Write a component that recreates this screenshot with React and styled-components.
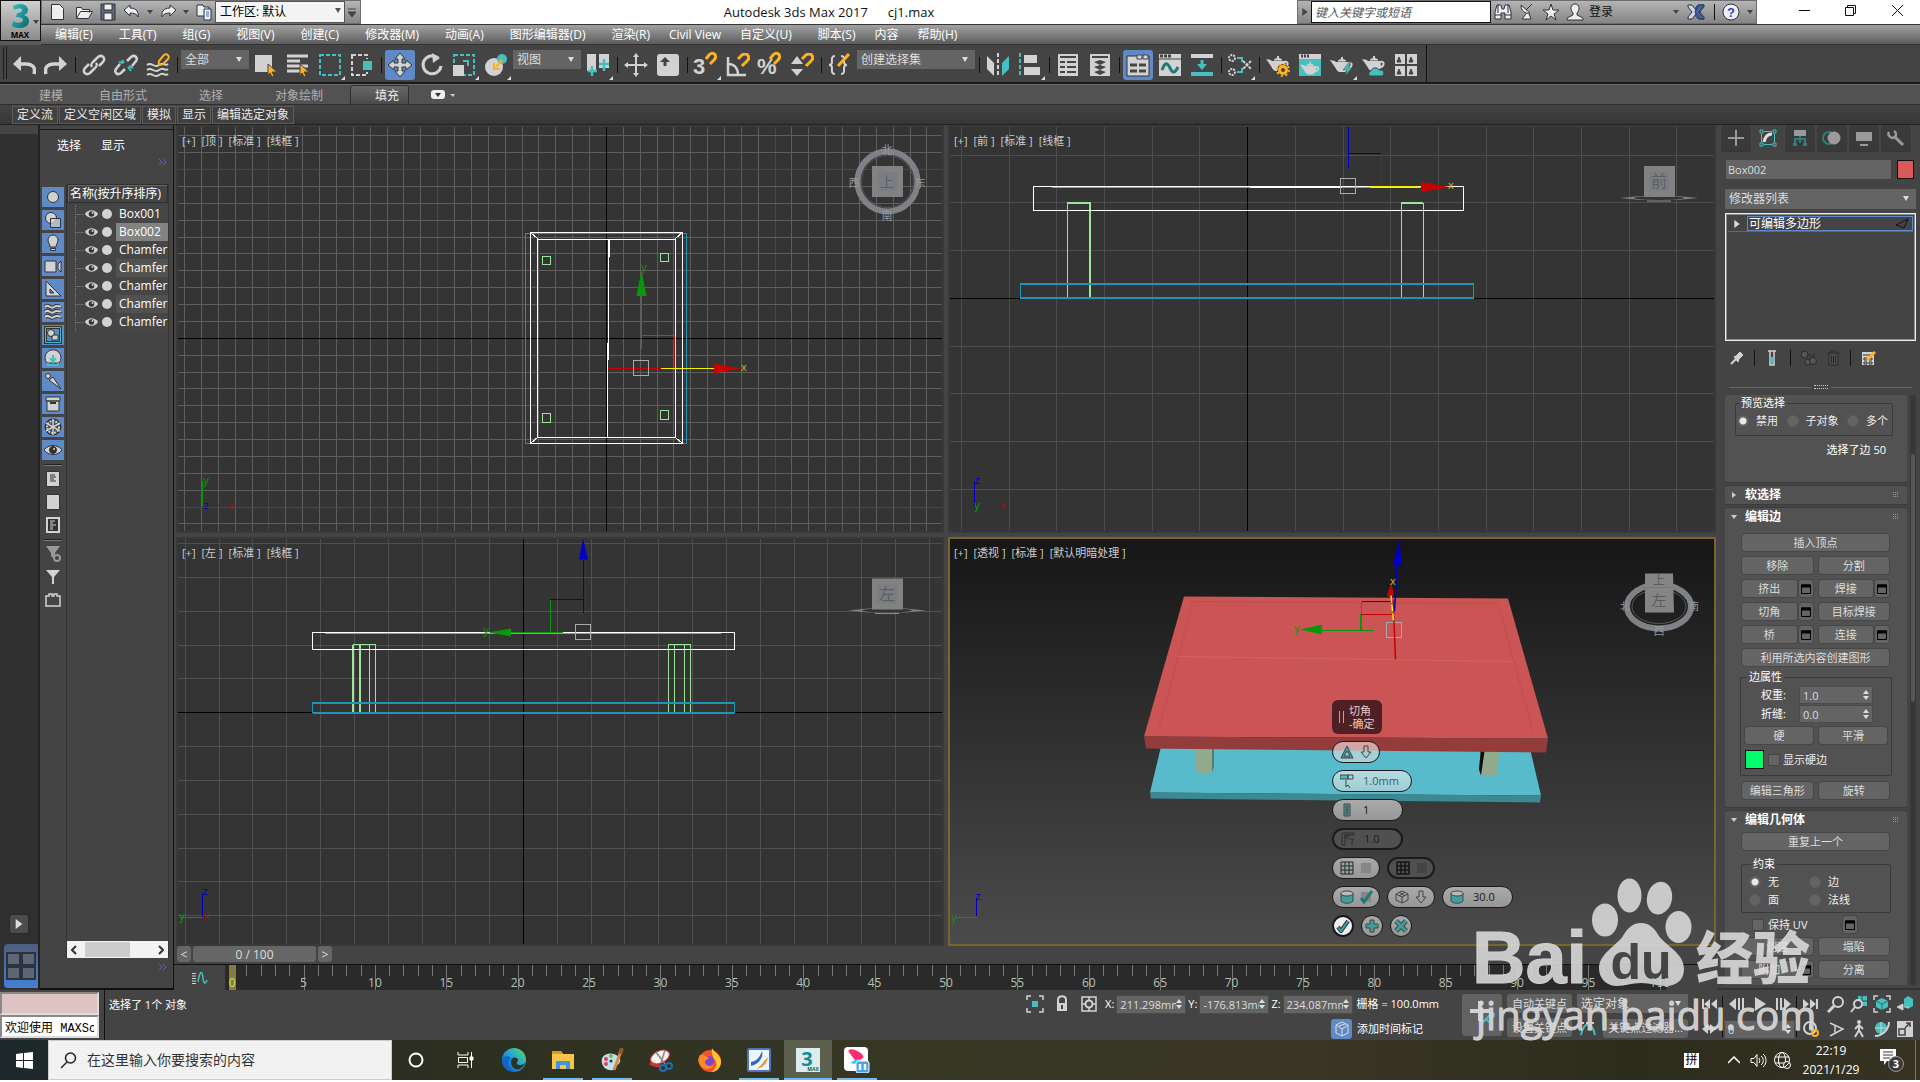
import React from "react";
import styled, { createGlobalStyle, css } from "styled-components";

const UI = `"Open Sans", "Noto Sans CJK SC", sans-serif`;
const L = "#d2d2d2";
const T = "#45bfbf";
const O = "#ffb11f";

const Global = createGlobalStyle`
  *, *::before, *::after { box-sizing: border-box; }
  body { margin: 0; background: #fff; font: 12px/16px ${UI}; color: #e6e6e6; }
  button, input, select { font: inherit; color: inherit; }
  button { padding: 0; border: 0; background: none; }
  svg { display: block; flex: none; }
  fieldset { min-width: 0; }
`;

const Page = styled.div`
  display: flex;
  flex-direction: column;
  height: 100vh;
  min-height: 900px;
  padding-bottom: 2px;
  overflow: hidden;
  position: relative;
`;

/* ---------- header ---------- */
const Header = styled.header`
  display: grid;
  grid-template-columns: 41px 1fr;
  grid-template-rows: 24px 21px;
  background: #5a5a5a;
`;
const AppButton = styled.button`
  grid-row: 1 / 3;
  height: 41px;
  border: 1px solid #111;
  background: linear-gradient(#d0d0d0, #8b8b8b);
  display: flex;
  align-items: center;
  justify-content: center;
`;
const TitleBar = styled.div`
  display: grid;
  grid-template-columns: auto 1fr auto;
  background: #fff;
`;
const Strip = styled.div`
  display: flex;
  align-items: center;
  height: 24px;
  width: ${(p) => p.$w}px;
  background: linear-gradient(#b4b4b4, #858585);
  border: 1px solid #6d6d6d;
`;
const TitleText = styled.h1`
  margin: 0;
  font-size: 13px;
  line-height: 24px;
  font-weight: 400;
  display: flex;
  justify-content: center;
  gap: 20px;
  color: #111;
`;
const StripButton = styled.button`
  flex: none;
  width: ${(p) => p.$w || 24}px;
  height: 20px;
  display: flex;
  align-items: center;
  justify-content: ${(p) => p.$side || "center"};
  color: #111;
`;
const TitleRight = styled.div`
  display: flex;
  justify-content: flex-end;
`;
const SearchBox = styled.input`
  flex: none;
  width: 180px;
  height: 22px;
  border: 1px solid #111;
  background: #fff;
  padding: 0 3px;
  font-style: italic;
  color: #333;
  &::placeholder { color: #555; opacity: 1; }
`;
const WinButtons = styled.div`
  display: flex;
  width: 163px;
  padding-left: 24px;
  color: #111;
  justify-content: space-between;
`;
const MenuBar = styled.nav`
  display: flex;
  padding-left: 1px;
  border-top: 1px solid #333;
  border-bottom: 1px solid #333;
  background: linear-gradient(#a2a2a2, #5c5c5c);
`;
const MenuItem = styled.button`
  padding: 0 ${(p) => (p.$plain ? 6 : 13)}px;
  line-height: 18px;
  color: #fff;
  white-space: nowrap;
`;

/* ---------- toolbar ---------- */
const Toolbar = styled.div`
  display: flex;
  height: 39px;
  background: #444;
  border-bottom: 2px solid #1a1a1a;
`;
const ToolGroup = styled.div`
  display: flex;
  padding: 5px 4px 0 8px;
  border-right: 1px solid #111;
  position: relative;
  &::before {
    content: "";
    position: absolute;
    left: 3px;
    top: 2px;
    width: 4px;
    height: 32px;
    border: 1px solid #1c1c1c;
    border-width: 0 1px;
  }
`;
const Tool = styled.button`
  width: 30px;
  height: 30px;
  margin: 0 1px;
  border-radius: 3px;
  display: flex;
  align-items: center;
  justify-content: center;
  background: ${(p) => (p.$on ? "#5f8ac7" : "transparent")};
  position: relative;
  ${(p) =>
    p.$more &&
    css`
      &::after {
        content: "";
        position: absolute;
        right: 0;
        bottom: 0;
        border: 2px solid #ddd;
        border-top-color: transparent;
        border-left-color: transparent;
      }
    `}
`;
const Sep = styled.span`
  width: 1px;
  height: ${(p) => p.$h || 16}px;
  margin: ${(p) => p.$m || "7px 2px 0 3px"};
  background: #111;
`;
const PickWrap = styled.span`
  display: inline-flex;
  position: relative;
  width: ${(p) => (p.$w ? p.$w + "px" : "100%")};
  margin: ${(p) => p.$m || 0};
  &::after {
    content: "";
    position: absolute;
    right: ${(p) => p.$r || 7}px;
    top: 7px;
    border: 3px solid transparent;
    border-top: 5px solid ${(p) => p.$caret || "#ddd"};
    border-bottom: 0;
    pointer-events: none;
  }
`;
const Pick = styled.select`
  appearance: none;
  width: 100%;
  height: ${(p) => p.$h || 19}px;
  border-radius: 0;
  padding: 0 16px 0 ${(p) => (p.$white ? 4 : 4)}px;
  background: ${(p) => (p.$white ? "#f4f4f4" : "#646464")};
  color: ${(p) => (p.$white ? "#000" : "#dedede")};
  border: ${(p) => (p.$white ? "1px solid #555" : "0")};
`;
function Select({ w, m, h, r, white, caret, label, value }) {
  return (
    <PickWrap $w={w} $m={m} $r={r} $caret={caret}>
      <Pick aria-label={label} $h={h} $white={white} defaultValue={value}>
        <option>{value}</option>
      </Pick>
    </PickWrap>
  );
}

/* ---------- ribbon ---------- */
const RibbonTabs = styled.div`
  display: flex;
  align-items: flex-end;
  height: 21px;
  padding-left: 15px;
  background: #525252;
  border-top: 1px solid #6c6c6c;
  border-bottom: 1px solid #2f2f2f;
`;
const RibbonTab = styled.button`
  height: 18px;
  padding: 1px 9px 0 24px;
  margin-right: ${(p) => (p.$near ? 3 : 19)}px;
  color: ${(p) => (p.$on ? "#eee" : "#b0b0b0")};
  border-radius: 2px 2px 0 0;
  background: ${(p) => (p.$on ? "linear-gradient(#686868, #4a4a4a)" : "none")};
  box-shadow: ${(p) => (p.$on ? "0 0 0 1px #303030" : "none")};
`;
const RibbonPanel = styled.div`
  display: flex;
  gap: 1px;
  height: 20px;
  padding: 1px 0 0 12px;
  background: linear-gradient(#444, #363636);
  border-bottom: 1px solid #222;
`;
const RibbonButton = styled.button`
  height: 18px;
  padding: 0 4px;
  border: 1px solid #5c5c5c;
  line-height: 16px;
  background: #404040;
  color: #e8e8e8;
`;

/* ---------- body ---------- */
const Body = styled.main`
  flex: 1;
  min-height: 0;
  display: grid;
  grid-template-columns: 40px 134px minmax(0, 1fr) 202px;
  background: #444;
`;
const LeftStrip = styled.aside`
  display: flex;
  flex-direction: column;
  align-items: center;
  justify-content: flex-end;
  gap: 10px;
  padding-bottom: 2px;
  background: linear-gradient(#444 9px, #303030 9px);
  border-right: 2px solid #222;
`;
const Expand = styled.button`
  width: 20px;
  height: 20px;
  border: 1px solid #2a2a2a;
  border-radius: 3px;
  background: #4c4c4c;
  display: flex;
  align-items: center;
  justify-content: center;
`;
const LayoutButton = styled.button`
  align-self: flex-end;
  width: 34px;
  height: 44px;
  border-radius: 4px 0 0 4px;
  background: linear-gradient(#4d5f7c, #4480d6);
  display: flex;
  align-items: center;
  justify-content: center;
`;
const Explorer = styled.section`
  display: flex;
  flex-direction: column;
  border-right: 1px solid #111;
  border-bottom: 2px solid #111;
  min-width: 0;
  min-height: 0;
`;
const ExplorerMenu = styled.div`
  display: flex;
  gap: 20px;
  padding: 4px 0 0 17px;
  margin-top: 4px;
  height: 29px;
  border-top: 1px solid #1b1b1b;
  & button { color: #fff; }
`;
const More = styled.button`
  align-self: flex-end;
  margin-right: 6px;
  width: 8px;
  height: 8px;
`;
const ExplorerBody = styled.div`
  flex: 1;
  min-height: 0;
  display: flex;
  padding: 18px 4px 0 2px;
`;
const FilterColumn = styled.div`
  width: 22px;
  display: flex;
  flex-direction: column;
  gap: 3px;
  padding-top: 3px;
`;
const Filter = styled.button`
  width: 22px;
  height: 20px;
  display: flex;
  align-items: center;
  justify-content: center;
  background: ${(p) => (p.$on ? "#5f8ac7" : "none")};
`;
const Rule = styled.hr`
  width: 18px;
  height: 2px;
  margin: 1px 2px 0;
  border: 0;
  border-top: 1px solid #222;
  border-bottom: 1px solid #777;
`;
const Tree = styled.div`
  flex: 1;
  min-width: 0;
  margin-left: 2px;
  border: 1px solid #333;
  border-width: 0 1px 0 1px;
  display: flex;
  flex-direction: column;
  justify-content: space-between;
`;
const TreeHead = styled.div`
  height: 19px;
  margin-bottom: 2px;
  padding-left: 2px;
  line-height: 17px;
  white-space: nowrap;
  overflow: hidden;
  border: 1px solid #2f2f2f;
  box-shadow: inset 1px 1px #666;
  color: #fff;
`;
const TreeList = styled.ul`
  list-style: none;
  margin: 0;
  padding: 0;
`;
const TreeRow = styled.li`
  display: flex;
  align-items: center;
  height: 18px;
  overflow: hidden;
  padding-left: 8px;
`;
const Branch = styled.i`
  flex: none;
  width: 10px;
  height: 18px;
  border-left: 1px dotted #777;
  background: linear-gradient(#666, #666) 0 9px / 8px 1px no-repeat;
`;
const TreeName = styled.span`
  flex: 1;
  min-width: 0;
  overflow: hidden;
  margin-left: 2px;
  padding-left: 3px;
  line-height: 18px;
  color: #fff;
  white-space: nowrap;
  background: ${(p) => (p.$sel ? "#828282" : p.$odd ? "#464646" : "#515151")};
`;
const HScroll = styled.div`
  display: flex;
  justify-content: space-between;
  align-items: center;
  height: 17px;
  padding: 0 4px;
  background: #f2f2f2;
  & i { width: 45px; height: 15px; background: #cdcdcd; margin-right: 20px; }
`;
const ExplorerFoot = styled.div`
  display: flex;
  flex-direction: column;
  height: 30px;
  padding-top: 5px;
`;

/* ---------- viewports ---------- */
const Center = styled.section`
  display: flex;
  flex-direction: column;
  min-width: 0;
  min-height: 0;
`;
const Views = styled.div`
  flex: 1;
  min-height: 0;
  display: grid;
  grid-template-columns: 1fr 1fr;
  grid-template-rows: 408fr 409fr;
  gap: 4px;
  padding: 0 2px;
`;
const View = styled.div`
  position: relative;
  min-width: 0;
  min-height: 0;
  border: 2px solid ${(p) => (p.$active ? "#7b662a" : "#393939")};
  background: ${(p) => (p.$active ? "linear-gradient(#161616, #4b4b4b)" : "#343434")};
  overflow: hidden;
`;
const Scene = styled.svg`
  width: 100%;
  height: 100%;
`;
const ViewLabel = styled.div`
  position: absolute;
  left: 4px;
  top: 6px;
  display: flex;
  gap: 6px;
  font-size: 11px;
  color: #ccc;
  & button { white-space: pre; line-height: 16px; }
`;
const Caddy = styled.form`
  position: absolute;
  left: 50%;
  top: 161px;
  display: flex;
  flex-direction: column;
  align-items: flex-start;
  gap: 7px;
  color: #1c1c1c;
`;
const CaddyTitle = styled.div`
  display: flex;
  align-items: center;
  gap: 5px;
  width: 50px;
  height: 34px;
  padding-left: 7px;
  border-radius: 6px;
  background: #4e2023;
  color: #eac9c9;
  font-size: 11px;
  line-height: 13px;
  & i { width: 5px; height: 12px; border: 1px solid #c99; border-width: 0 1px; }
`;
const CaddyRow = styled.div`
  display: flex;
  gap: 7px;
`;
const Pill = styled.label`
  display: flex;
  align-items: center;
  gap: 5px;
  width: ${(p) => p.$w}px;
  height: 22px;
  padding-left: ${(p) => (p.$w > 22 ? 7 : 0)}px;
  justify-content: ${(p) => (p.$w > 22 ? "flex-start" : "center")};
  border: ${(p) => (p.$off || p.$strong ? 2 : 1)}px solid #1b1b1b;
  border-radius: 11px;
  background: ${(p) =>
    p.$off
      ? "#505050"
      : p.$strong
      ? "#eee"
      : p.$tint === "cyan"
      ? "linear-gradient(#b5dce2, #9fccd3)"
      : p.$tint === "rose"
      ? "linear-gradient(#d3a5a5 40%, #a5d0d8 45%)"
      : "linear-gradient(#aaa, #979797)"};
  & input { width: 44px; min-width: 0; border: 0; padding: 0 0 0 4px; background: none; font-size: 11px; color: ${(p) => (p.$tint ? "#35606a" : "#1a1a1a")}; }
`;

/* ---------- time line ---------- */
const SliderRow = styled.div`
  display: flex;
  gap: 2px;
  height: 18px;
  padding-left: 3px;
`;
const SliderPart = styled.button`
  width: ${(p) => p.$w}px;
  height: 16px;
  border-radius: 3px;
  background: #666;
  color: #ddd;
  line-height: 15px;
`;
const Track = styled.div`
  display: grid;
  grid-template-columns: 51px 1fr 51px;
  height: 26px;
  border-top: 1px solid #111;
`;
const TrackIcon = styled.button`
  display: flex;
  align-items: center;
  justify-content: center;
`;
const Ruler = styled.div`
  display: grid;
  grid-template-columns: repeat(101, minmax(0, 1fr));
  background: #2a2a2a;
`;
const Tick = styled.span`
  position: relative;
  display: flex;
  justify-content: center;
  padding-top: 10px;
  line-height: 15px;
  color: #b5c0b5;
  height: 25px;
  &::before {
    content: "";
    position: absolute;
    left: 50%;
    top: 0;
    width: 1px;
    height: ${(p) => (p.$major ? 25 : 11)}px;
    background: #777;
  }
  & b { font-weight: 400; z-index: 1; white-space: nowrap; flex: none; }
  ${(p) => p.$now && css`background: linear-gradient(#8a8020, #8a8020) 50% 0 / 7px 25px no-repeat; color: #e0dc60;`}
`;

/* ---------- command panel ---------- */
const Command = styled.aside`
  display: flex;
  flex-direction: column;
  min-height: 0;
  padding: 0 4px 3px 3px;
  border-bottom: 2px solid #333;
`;
const Tabs = styled.div`
  display: flex;
  gap: 2px;
  height: 27px;
  margin-right: -1px;
`;
const Tab = styled.button`
  width: 30px;
  display: flex;
  align-items: center;
  justify-content: center;
  border-radius: 4px 4px 0 0;
  background: ${(p) => (p.$on ? "#444" : "#3a3a3a")};
  border-bottom: 1px solid ${(p) => (p.$on ? "#444" : "#363636")};
`;
const Pad = styled.div`
  display: flex;
  flex-direction: column;
  flex: 1;
  min-height: 0;
  padding: 8px 0 0 4px;
`;
const NameRow = styled.div`
  display: flex;
  gap: 6px;
  margin: 0 2px 10px 1px;
`;
const NameInput = styled.input`
  flex: 1;
  min-width: 0;
  height: 19px;
  border: 0;
  padding: 0 2px;
  background: #646464;
  color: #ddd;
  font-size: 11px;
`;
const Swatch = styled.button`
  width: ${(p) => p.$w}px;
  height: 19px;
  border: 1px solid #111;
  background: ${(p) => p.$c};
`;
const Stack = styled.div`
  height: 128px;
  margin-top: 4px;
  border: 1px solid #eee;
  outline: 1px solid #8c8c8c;
  outline-offset: -2px;
  padding: 2px;
`;
const StackRow = styled.div`
  display: flex;
  align-items: center;
  height: 16px;
  padding-left: 5px;
  gap: 6px;
  border-bottom: 1px solid #666;
  & button {
    flex: 1;
    height: 15px;
    border: 1px solid #5f8ac7;
    color: #fff;
    line-height: 13px;
    display: flex;
    justify-content: space-between;
    align-items: center;
    padding: 0 3px 0 1px;
  }
`;
const StackTools = styled.div`
  display: flex;
  align-items: center;
  height: 34px;
  padding-left: 1px;
`;
const StackTool = styled.button`
  width: ${(p) => p.$w || 22}px;
  display: flex;
  justify-content: center;
`;
const Splitter = styled.div`
  display: flex;
  align-items: center;
  gap: 3px;
  height: 16px;
  margin: 4px 4px 0;
  & hr { flex: 1; border: 0; border-top: 1px solid #666; margin: 0; }
  & i { width: 14px; height: 4px; border-top: 1px dotted #ccc; border-bottom: 1px dotted #ccc; }
`;
const Rollouts = styled.div`
  flex: 1;
  min-height: 0;
  display: grid;
  grid-template-columns: 1fr 6px;
  gap: 3px;
  overflow: hidden;
  font-size: 11px;
`;
const RollList = styled.div`
  display: flex;
  flex-direction: column;
  gap: 4px;
  min-height: 0;
  overflow: hidden;
`;
const VScroll = styled.div`
  background: #383838;
  border-radius: 3px;
  padding: 59px 1px 0;
  &::before { content: ""; display: block; height: 248px; background: #565656; border-radius: 2px; }
`;
const Roll = styled.section`
  flex: none;
  background: #525252;
  border-radius: 2px;
  box-shadow: 0 0 0 1px #3c3c3c;
`;
const RollHead = styled.h2`
  display: flex;
  align-items: center;
  height: 18px;
  margin: 0;
  padding: 0 8px 0 6px;
  font-size: 12px;
  line-height: 18px;
  color: #fff;
  & button { flex: 1; text-align: left; display: flex; align-items: center; gap: 8px; font-weight: 700; }
`;
const RollBody = styled.div`
  display: flex;
  flex-direction: column;
  gap: 6px;
  padding: ${(p) => p.$t}px 18px 8px 17px;
`;
const Pair = styled.div`
  display: grid;
  grid-template-columns: 1fr 1fr;
  gap: 6px;
`;
const Split = styled.div`
  display: grid;
  grid-template-columns: 1fr 14px;
  gap: 2px;
`;
const Btn = styled.button`
  height: 17px;
  border-radius: 3px;
  background: #646464;
  box-shadow: 0 0 0 1px #474747;
  color: #ddd;
  line-height: 16px;
  white-space: nowrap;
  display: flex;
  align-items: center;
  justify-content: center;
`;
const Group = styled.fieldset`
  margin: ${(p) => p.$m};
  padding: ${(p) => p.$p};
  border: 1px solid #3a3a3a;
  border-radius: 2px;
  & legend { padding: 0 2px; margin-left: 2px; line-height: 16px; color: #fff; }
`;
const RadioRow = styled.div`
  display: flex;
  justify-content: space-between;
`;
const RadioGrid = styled.div`
  display: grid;
  grid-template-columns: 60px 1fr;
  row-gap: 2px;
`;
const Check = styled.label`
  display: flex;
  align-items: center;
  gap: ${(p) => p.$g || 7}px;
  color: #eee;
  white-space: nowrap;
  & input {
    appearance: none;
    margin: 0;
    width: 12px;
    height: 12px;
    background: #646464;
    border: 1px solid #484848;
  }
  & input[type="radio"] { border-radius: 50%; border-color: #5c5c5c; }
  & input[type="radio"]:checked { background: radial-gradient(#e8e8e8 3px, #646464 4px); }
`;
const Status = styled.p`
  margin: 6px 21px 24px;
  text-align: right;
  color: #fff;
`;
const FieldRow = styled.label`
  display: grid;
  grid-template-columns: 38px 72px;
  column-gap: 14px;
  height: 16px;
  margin-bottom: 3px;
  padding-left: 3px;
  color: #fff;
  & > em { font-style: normal; text-align: right; }
`;
const NumBox = styled.span`
  display: flex;
  align-items: center;
  width: ${(p) => p.$w}px;
  height: ${(p) => p.$h || 16}px;
  background: #646464;
  box-shadow: 0 0 0 1px #4b4b4b;
  padding-right: 3px;
  & input { flex: 1; min-width: 0; width: 0; border: 0; background: none; padding: 0 0 0 3px; color: #ddd; height: 100%; }
`;
const Line = styled.div`
  display: flex;
  align-items: center;
  gap: 4px;
`;
const KeepUV = styled.div`
  display: flex;
  justify-content: space-between;
  padding: 0 32px 0 10px;
  margin: -3px 0 -1px;
  & > button { width: 14px; height: 17px; }
`;
const InnerStack = styled.div`
  display: flex;
  flex-direction: column;
  gap: 6px;
  padding-top: 2px;
`;

/* ---------- status bar ---------- */
const StatusBar = styled.footer`
  display: flex;
  height: 50px;
  background: #444;
`;
const Listener = styled.div`
  width: 105px;
  border-right: 1px solid #111;
  padding: 2px 0;
`;
const ListenerLine = styled.input`
  display: block;
  width: 99px;
  height: 23px;
  border: 2px inset #ddd;
  padding: 0 3px;
  color: #000;
  background: ${(p) => (p.$macro ? "#dec3c3" : "#fff")};
  && { font: 12px "Liberation Mono", "Noto Sans CJK SC", monospace; }
`;
const Prompt = styled.div`
  flex: 1;
  padding: 7px 4px;
  color: #fff;
  font-size: 11px;
`;
const Cluster = styled.div`
  display: flex;
  flex-direction: column;
  gap: 5px;
  padding-top: 4px;
  margin-right: ${(p) => p.$mr || 0}px;
`;
const CRow = styled.div`
  display: flex;
  align-items: center;
  height: 20px;
  gap: ${(p) => p.$g || 0}px;
  padding-left: ${(p) => p.$pl || 0}px;
  white-space: nowrap;
  color: #fff;
  font-size: 11px;
`;
const IconBtn = styled.button`
  width: ${(p) => p.$w || 23}px;
  height: 20px;
  display: flex;
  align-items: center;
  justify-content: center;
  background: ${(p) => (p.$on ? "#5f8ac7" : "none")};
  border-radius: 3px;
`;
const KeyBtn = styled.button`
  width: ${(p) => p.$w}px;
  height: ${(p) => p.$h || 19}px;
  border-radius: 3px;
  background: #626262;
  color: #ddd;
  font-size: 11px;
  display: flex;
  align-items: center;
  justify-content: center;
`;

/* ---------- task bar ---------- */
const TaskBar = styled.div`
  display: flex;
  height: 40px;
  background: linear-gradient(90deg, #1d282b, #2b2e20 400px, #383825 50%, #3a3626 68%, #2c2c1d 85%, #363323);
`;
const TaskItem = styled.button`
  width: 48px;
  height: 40px;
  margin-right: ${(p) => (p.$start ? 0 : 1)}px;
  display: flex;
  align-items: center;
  justify-content: center;
  background: ${(p) => (p.$on ? "#5d5f4f" : "none")};
  box-shadow: ${(p) => (p.$on || p.$run ? "inset 0 -2px #76b9ed" : "none")};
  ${(p) => p.$run && css`width: 40px; margin: 0 5px 0 4px;`}
`;
const TaskSearch = styled.label`
  display: flex;
  align-items: center;
  gap: 10px;
  width: 344px;
  padding-left: 11px;
  background: #f2f2f2;
  border: 1px solid #ccc;
  & input { flex: 1; min-width: 0; border: 0; background: none; font-size: 14px; color: #333; padding: 0; }
  & input::placeholder { color: #333; opacity: 1; }
`;
const Tray = styled.div`
  display: flex;
  align-items: center;
  margin-left: auto;
  color: #fff;
`;
const Ime = styled.button`
  width: 15px;
  height: 15px;
  background: #fff;
  color: #000;
  font-size: 12px;
  line-height: 14px;
  margin-right: 23px;
`;
const Clock = styled.time`
  width: 74px;
  text-align: center;
  line-height: 19px;
  font-size: 12px;
  white-space: pre-line;
`;
const Peek = styled.i`
  width: 5px;
  height: 40px;
  border-left: 1px solid #77776a;
`;
const Watermark = styled.svg`
  position: absolute;
  right: 98px;
  bottom: 40px;
  pointer-events: none;
`;

/* ---------- icons ---------- */
const I = ({ w = 24, h, v, children }) => (
  <svg width={w} height={h || w} viewBox={v || `0 0 ${w} ${h || w}`} fill="none" stroke={L} strokeWidth="2" aria-hidden="true">
    {children}
  </svg>
);
const Magnet = ({ x = 12, y = 0 }) => (
  <path d={`M${x} ${y + 6}l4-4c5-3 9 2 5 6l-5 5`} stroke={O} strokeWidth="3" />
);
const Pot = ({ at }) => (
  <g transform={at}>
    <path d="M6 6h12c2 4 0 8-3 10H9C6 14 4 10 6 6z" fill={L} stroke="none" />
    <path d="M0 4l5 1 3 4-1 5z" fill={L} stroke="none" />
    <path d="M18 7c5-1 5 4-1 6" />
    <path d="M8 5c2-2 6-2 8 0z" fill={L} strokeWidth="1" />
    <path d="M12 1v2" />
  </g>
);
const ic = {
  undo: <I><path d="M22 21c2-7-2-10-8-10H4" strokeWidth="3.5" /><path d="M9 3l-8 8 8 7z" fill={L} stroke="none" /></I>,
  redo: <I><path d="M2 21c-2-7 2-10 8-10h10" strokeWidth="3.5" /><path d="M15 3l8 8-8 7z" fill={L} stroke="none" /></I>,
  link: <I><path d="M10 14c-2-3 0-4 2-6l4-4c4-3 8 1 5 5l-4 4M14 10c2 3 0 4-2 6l-4 4c-4 3-8-1-5-5l4-4" strokeWidth="2.5" /></I>,
  unlink: <I><path d="M13 8l4-4c4-3 7 1 5 4l-4 5M11 16l-4 4c-4 3-7-1-5-4l4-5" strokeWidth="2.5" /><path d="M8 7l2 3M14 14l3 4M5 9l4 1M15 13l4 2" stroke={T} /></I>,
  bind: <I><path d="M1 12c5-4 7 4 12 0s6 2 9-1M1 17c5-4 7 4 12 0s6 2 9-1M1 22c5-4 7 4 12 0s6 2 9-1" /><path d="M13 8l5-6c3-2 6 1 4 4l-5 5c-3 2-5 0-4-3z" stroke={O} /></I>,
  sel: <I><path d="M1 2h17v17H1z" fill={L} stroke="none" /><path d="M14 11l9 8h-5l2 4-2 1-2-4-2 3z" fill={O} stroke="#444" strokeWidth="1" /></I>,
  selName: <I><path d="M1 3h21M1 8h13M1 13h21M1 18h13" strokeWidth="3" /><path d="M14 11l9 8h-5l2 4-2 1-2-4-2 3z" fill={O} stroke="#444" strokeWidth="1" /></I>,
  rect: <I><path d="M2 2h20v20H2z" stroke={T} strokeDasharray="4 2" /></I>,
  win: <I><path d="M2 2h15v20H2z" strokeDasharray="4 2" /><path d="M12 7h11v11H12z" fill={T} stroke="#444" /></I>,
  move: <I><path d="M12 0l5 6h-3v4h4V7l6 5-6 5v-3h-4v4h3l-5 6-5-6h3v-4H6v3l-6-5 6-5v3h4V6H7z" fill={L} stroke="#333" strokeWidth="1" /></I>,
  rotate: <I><path d="M18 5a9 9 0 1 0 3 8" strokeWidth="3" /><path d="M12 0l8 5-7 5z" fill={L} stroke="none" /></I>,
  scale: <I><path d="M2 2h20v20H2z" stroke={T} strokeDasharray="4 2" /><path d="M1 12h11v11H1z" fill={L} stroke="none" /><path d="M11 8h5v5" stroke={T} /></I>,
  place: <I><circle cx="10" cy="14" r="9" fill={L} stroke="none" /><circle cx="18" cy="6" r="5" fill={T} stroke="none" /><path d="M18 7l-6 7M10 10v6h6" stroke={O} /></I>,
  pivot: <I><path d="M1 1h9v17H1zM13 1h10v14H13z" fill={L} stroke="none" /><path d="M6 13v10M2 18h9M18 6v12M13 11h10" stroke={T} strokeWidth="2.5" /></I>,
  manip: <I><path d="M12 3v18M2 12h20" /><path d="M12 0l3 4H9zM12 24l3-4H9zM0 12l4-3v6zM24 12l-4-3v6z" fill={L} stroke="none" /></I>,
  kbd: <I><rect x="1" y="1" width="22" height="22" rx="3" fill={L} stroke="none" /><path d="M9 13V7" stroke="#444" strokeWidth="3" /><path d="M4 9l5-5 5 5z" fill="#444" stroke="none" /></I>,
  brace: <I><path d="M7 3c-4 0-3 4-3 6s-1 3-3 3c2 0 3 1 3 3s-1 6 3 6M13 3c4 0 3 4 3 6s1 3 3 3c-2 0-3 1-3 3s1 6-3 6" /><path d="M10 13L21 1" stroke={O} strokeWidth="3" /></I>,
  angle: <I><path d="M2 4v18h18M2 11c6 0 10 4 10 11" strokeWidth="2.5" /><Magnet /></I>,
  spin: <I><path d="M7 3l6 8H1zM7 23l6-7H1z" fill={L} stroke="none" /><Magnet /></I>,
  mirror: <I><path d="M1 3l7 7v13l-7-7z" fill={L} stroke="none" /><path d="M12 0v24" strokeDasharray="4 2" /><path d="M23 3l-7 7v13l7-7z" fill={T} stroke="none" /></I>,
  align: <I><path d="M2 0v24" stroke={T} strokeDasharray="4 2" /><path d="M6 2h13v8H6zM6 14h16v8H6z" fill={L} stroke="none" /></I>,
  layers: <I><path d="M2 1h20v22H2z" fill={L} stroke="none" /><path d="M4 4h16M4 9h5M11 9h9M4 14h5M11 14h9M4 19h5M11 19h9" stroke="#444" /></I>,
  layer2: <I><path d="M2 1h20v22H2z" fill={L} stroke="none" /><path d="M4 4h16" stroke="#444" /><path d="M12 7l6 2-6 3-6-3zM12 12l6 2-6 3-6-3zM12 17l6 2-6 3-6-3z" fill="#444" stroke="none" /></I>,
  ribbon: <I><path d="M1 3h22v20H1z" fill={L} stroke="#333" strokeWidth="1" /><path d="M11 2h5v4h-5zM17 2h5v4h-5z" fill={L} stroke="#444" strokeWidth="1" /><path d="M4 12h7M13 12h7M4 18h7M13 18h7" stroke="#444" strokeWidth="3" /></I>,
  curve: <I><path d="M1 1h22v22H1z" fill={L} stroke="none" /><path d="M2 3h12" stroke="#444" strokeWidth="3" strokeDasharray="3 1" /><path d="M1 6h22" stroke="#444" strokeWidth="1" /><path d="M4 17c3-8 5-8 8-2s5 5 8-1" stroke="#277" strokeWidth="3" /></I>,
  schem: <I><path d="M1 1h22v4H1z" fill={L} stroke="none" /><path d="M1 19h22v4H1z" fill={T} stroke="none" /><path d="M12 7v5" stroke={T} strokeWidth="3" /><path d="M7 11h10l-5 6z" fill={T} stroke="none" /></I>,
  mat: <I><circle cx="4" cy="5" r="3" strokeDasharray="2 1" /><circle cx="4" cy="19" r="3" strokeDasharray="2 1" /><path d="M9 5h5v4M9 19h5v-4" stroke={T} /><path d="M15 8l8 8M23 8l-8 8" strokeDasharray="3 1" /></I>,
  rset: <I><Pot at="translate(0 2)" /><circle cx="17" cy="17" r="6" fill="#444" stroke="none" /><circle cx="17" cy="17" r="3.5" stroke={O} strokeWidth="3" /><circle cx="17" cy="17" r="6" stroke={O} strokeDasharray="2 2.7" /></I>,
  rfb: <I><path d="M1 1h22v22H1z" fill={T} stroke="none" /><path d="M1 1h22v5H1z" fill={L} stroke="none" /><path d="M3 3h9" stroke="#444" strokeWidth="3" strokeDasharray="2 1" /><Pot at="translate(2 8) scale(.85)" /></I>,
  rend: <I><Pot at="translate(0 3)" /><path d="M19 9l-6 8h4l-2 6 7-8h-4l3-6z" fill={T} stroke="#444" strokeWidth=".5" /></I>,
  rcloud: <I><Pot at="translate(0 2)" /><path d="M9 23c-3 0-3-5 0-5 1-4 7-4 8-1 6-1 6 6 2 6z" fill={T} stroke="#444" strokeWidth="1" /></I>,
  gal: <I><path d="M1 1h10v10H1zM13 1h10v10H13zM1 13h10v10H1zM13 13h10v10H13z" fill={L} stroke="none" /><path d="M3 9l2-5 2 5zM15 9l2-5 2 5zM3 21l2-5 2 5zM15 21l2-5 2 5z" fill="#444" stroke="#444" strokeWidth="1" /></I>,
};
const Txt3 = ({ t }) => (
  <svg width="28" height="28" viewBox="0 0 28 28" aria-hidden="true">
    <text x="1" y="23" fontFamily="Liberation Sans, sans-serif" fontWeight="700" fontSize="22" fill={L}>{t}</text>
    <path d="M14 8l3-4c4-4 9 0 5 5l-4 4" fill="none" stroke={O} strokeWidth="3" />
  </svg>
);
const Tri = ({ d = "down", c = "#444", s = 3 }) => (
  <svg width={s * 2} height={s * 2} viewBox="0 0 6 6" aria-hidden="true">
    <path d={d === "down" ? "M0 1h6L3 5z" : "M1 0v6l4-3z"} fill={c} />
  </svg>
);
const Chev = () => (
  <svg width="8" height="6" viewBox="0 0 8 6" fill="none" stroke="#6463b0"><path d="M0 0l3 3-3 3M4 0l3 3-3 3" /></svg>
);
const Spin = () => (
  <svg width="6" height="10" viewBox="0 0 6 10" fill="#ddd" aria-hidden="true"><path d="M3 0l3 4H0zM3 10l3-4H0z" /></svg>
);
const Num = ({ w, h, v, label }) => (
  <NumBox $w={w} $h={h}><input aria-label={label} defaultValue={v} /><Spin /></NumBox>
);
const WinIcon = () => (
  <svg width="10" height="10" viewBox="0 0 10 10" fill="none" stroke="#000"><path d="M.5 1h9v8.5h-9z" /><path d="M0 2h10" strokeWidth="3" /></svg>
);
const Q = ({ children }) => (
  <svg width="18" height="18" viewBox="0 0 18 18" fill="#eee" stroke="#2b3540" strokeWidth="1">{children}</svg>
);
const F = ({ children }) => (
  <svg width="18" height="18" viewBox="0 0 18 18" fill={L} stroke="#333" strokeWidth="1">{children}</svg>
);
const waves = "M1 4c4-4 5 3 9 0s5 1 7-1M1 9c4-4 5 3 9 0s5 1 7-1M1 14c4-4 5 3 9 0s5 1 7-1";
const flake = "M9 1v16M2 5l14 8M2 13l14-8";
const filters = [
  <F><circle cx="9" cy="9" r="5.5" /></F>,
  <F><circle cx="7" cy="7" r="5.5" /><path d="M6.5 7.5h10v9h-10z" fillOpacity=".7" /></F>,
  <F><path d="M9 1a5 5 0 0 1 5 5c0 3-2 4-2 7H6c0-3-2-4-2-7a5 5 0 0 1 5-5z" /><path d="M6.5 14.5h5v2h-5z" /></F>,
  <F><path d="M1 4h11v11H1zM14 7l3-3v11l-3-3z" /></F>,
  <F><path d="M2 1l15 15H2zM6 9v4h4z" fillRule="evenodd" /></F>,
  <F><path d={waves} fill="none" stroke="#333" strokeWidth="4" /><path d={waves} fill="none" stroke={L} strokeWidth="2" /></F>,
  <F><path d="M1.5 1.5h15v15h-15z" fill="none" stroke="#333" strokeWidth="3" /><path d="M1.5 1.5h15v15h-15z" fill="none" stroke={T} /><circle cx="7" cy="7" r="3.5" /><path d="M9 9h5v5H8v-3z" /></F>,
  <F><path d="M3 14a8 8 0 1 1 12 0z" /><path d="M9 6v6M6 9l3 4 3-4M4 14v2h10v-2" stroke={T} strokeWidth="2" fill="none" /></F>,
  <F><circle cx="4" cy="4" r="2.5" /><path d="M5 8l4-3 8 12z" /></F>,
  <F><path d="M2 2h14v4H2zM3 6h12v10H3z" /><path d="M6 8h6" strokeWidth="2" /></F>,
  <F><circle cx="9" cy="9" r="6.500" fill="none" stroke="#333" strokeWidth="4" /><path d={flake} stroke="#333" strokeWidth="3" fill="none" /><circle cx="9" cy="9" r="6" fill="none" stroke={L} strokeWidth="2" strokeDasharray="2 1" /><path d={flake} stroke={L} strokeWidth="1.5" fill="none" /></F>,
  <F><path d="M0 9c4-6 14-6 18 0-4 6-14 6-18 0z" /><circle cx="9" cy="9" r="3.5" fill="#333" /><circle cx="10" cy="8" r="1" fill={L} stroke="none" /></F>,
];
const docs = [
  <F><path d="M2.5 1.500h13v15h-13z" /><path d="M6 5h5M6 7h6M6 9h4M6 11h6" /></F>,
  <F><path d="M2.5 1.5h13v15h-13z" /></F>,
  <F><path d="M3 2h12v14H3z" fill="#333" stroke={L} strokeWidth="2" /><path d="M6 5h5M6 7h3M6 9h6M6 11h3M6 13h3" stroke={L} /></F>,
];
const funnels = [
  <F><path d="M2 1h14l-5 7v7l-4-4V8z" fill="#999" stroke="none" /><circle cx="13" cy="13" r="3" fill="none" stroke="#999" strokeWidth="2" /></F>,
  <F><path d="M2 2h14l-6 7v7H8V9z" stroke="none" /></F>,
  <F><path d="M2 5h3V3h3v2h2V3h3v2h3v10H2z" fill="none" stroke={L} strokeWidth="1.5" /></F>,
];
const Eye = () => (
  <svg width="13" height="8" viewBox="0 0 13 8"><path d="M0 4c3-5 10-5 13 0-3 5-10 5-13 0z" fill={L} /><circle cx="6.5" cy="4" r="2.8" fill="#333" /><circle cx="7.5" cy="3" r="1" fill={L} /></svg>
);

/* ---------- scenes ---------- */
const range = (c, s, a, b) => {
  const out = [];
  for (let k = Math.ceil((a - c) / s); c + k * s <= b; k++) out.push([k, Math.floor(c + k * s) + 0.5]);
  return out;
};
function Grid({ x, y, w, h, cx, cy, s, color, dimEvery }) {
  const vs = range(cx, s, x, x + w);
  const hs = range(cy, s, y, y + h);
  const tone = (k) => (dimEvery && k % dimEvery === 0 ? "#484848" : color);
  return (
    <g shapeRendering="crispEdges">
      {vs.filter(([k]) => k).map(([k, p]) => <path key={"v" + k} d={`M${p} ${y}v${h}`} stroke={tone(k)} />)}
      {hs.filter(([k]) => k).map(([k, p]) => <path key={"h" + k} d={`M${x} ${p}h${w}`} stroke={tone(k)} />)}
      <path d={`M${Math.floor(cx) + 0.5} ${y}v${h}M${x} ${Math.floor(cy) + 0.5}h${w}`} stroke="#000" />
    </g>
  );
}
const G = ({ x, y, c, children, s = 11 }) => (
  <text x={x} y={y} fill={c} stroke="none" fontSize={s} textAnchor="middle" dominantBaseline="central">{children}</text>
);
const FlatCube = ({ x, y, ch }) => (
  <g>
    <path d={`M${x - 39} ${y + 17}l20-2h38l20 2-20 2h-38z`} fill="#7c7f83" />
    <ellipse cx={x} cy={y + 17} rx="25" ry="2" fill="#343434" />
    <path d={`M${x - 12} ${y + 20}h24`} stroke="#8b8e92" />
    <rect x={x - 15} y={y - 15} width="31" height="31" fill="#828282" />
    <rect x={x - 10} y={y - 9} width="20" height="19" fill="#7b7d82" />
    <G x={x} y={y} c="#5c6065" s={16}>{ch}</G>
  </g>
);
const viewProps = (vb) => ({ viewBox: vb, preserveAspectRatio: "xMidYMid slice", fill: "none" });
const GN = "#9ae59a", BL = "#1f94b4", GR = "#0a960a", RD = "#c80000", BU = "#0000c4", YL = "#f4f400";

const TopScene = () => (
  <Scene {...viewProps("178 127 764 404")}>
    <Grid x={178} y={127} w={764} h={404} cx={606.4} cy={338.3} s={16.87} color="#5e5e5e" dimEvery={10} />
    <g shapeRendering="crispEdges">
      <path d="M525.5 233.5h161v210h-161z" stroke={BL} />
      <path d="M530.5 232.5h152v211h-152zM537.5 239.5h138v198h-138z" stroke="#fff" />
      <path d="M530 232l8 7M683 232l-8 7M530 444l8-7M683 444l-8-7M609.5 239v18M608.5 240v120M607.5 343v94" stroke="#fff" />
      <path d="M542.5 256.5h8v8h-8zM660.5 253.5h8v8h-8zM542.5 413.5h8v9h-8zM660.5 410.5h8v9h-8z" stroke={GN} />
      <path d="M641.5 295v54M641.5 335.5h33" stroke={GR} />
      <path d="M674.5 335v33M608 368.5h66" stroke={RD} />
      <path d="M661 368.5h53" stroke={YL} />
      <path d="M633.5 360.5h15v15h-15z" stroke="#aaa" />
      <path d="M202.5 481v25" stroke={GR} /><path d="M203 505.5h26" stroke="#a00" />
    </g>
    <path d="M641.5 270l5 26h-10z" fill={GR} /><path d="M741 368.5l-27-5v10z" fill={RD} />
    <G x={644} y={266} c={GR}>y</G><G x={744} y={366} c="#c0bc20">x</G>
    <G x={206} y={479} c={GR}>y</G><G x={231} y={504} c="#a01010">x</G><G x={206} y={504} c={BU}>z</G>
    <circle cx="887.5" cy="181.5" r="30" stroke="#7e8186" strokeWidth="6" />
    <circle cx="887.5" cy="181.5" r="26" stroke="#55575a" strokeWidth="1" />
    <rect x="872" y="166" width="31" height="31" fill="#828282" /><rect x="878" y="172" width="19" height="19" fill="#7b7d82" />
    <G x={887} y={181} c="#5c6065" s={14}>上</G>
    <G x={887} y={149} c="#999">北</G><G x={887} y={215} c="#999">南</G><G x={854} y={182} c="#999">西</G><G x={920} y={182} c="#999">东</G>
  </Scene>
);
const FrontScene = () => (
  <Scene {...viewProps("950 127 764 404")}>
    <Grid x={950} y={127} w={764} h={404} cx={1247.6} cy={298.3} s={47.7} color="#4d4d4d" />
    <g shapeRendering="crispEdges">
      <path d="M1067.5 297v-94M1401.5 297v-94M1423.5 297v-94" stroke={GN} />
      <path d="M1067 203h23v94M1401 203h22" stroke={GN} strokeWidth="2" />
      <path d="M1020.5 283v15M1473.5 283v15" stroke={BL} /><path d="M1020 284h454M1020 298h454" stroke={BL} strokeWidth="2" />
      <path d="M1033.5 186.5h430v24h-430z" stroke="#fff" /><path d="M1052 187.5h390" stroke="#999" />
      <path d="M1250 187.5h92" stroke="#fff" />
      <path d="M1348.5 127v41M1348 153.5h33" stroke={BU} /><path d="M1381.5 153v33" stroke={RD} />
      <path d="M1370 187h50" stroke={YL} strokeWidth="2" />
      <path d="M1340.5 178.5h15v15h-15z" stroke="#aaa" />
      <path d="M974.5 481v25" stroke={BU} /><path d="M975 505.5h26" stroke="#a00" />
    </g>
    <path d="M1450 187l-29-5v10z" fill={RD} /><G x={1451} y={184} c="#c0bc20">x</G>
    <G x={977} y={479} c={BU}>z</G><G x={1003} y={504} c="#a01010">x</G><G x={977} y={504} c={GR}>y</G>
    <FlatCube x={1659} y={181} ch="前" />
  </Scene>
);
const LeftScene = () => (
  <Scene {...viewProps("178 539 764 406")}>
    <Grid x={178} y={539} w={764} h={406} cx={523.5} cy={712.8} s={33.82} color="#505050" />
    <g shapeRendering="crispEdges">
      <path d="M353 645v67M360 645v67" stroke={GN} strokeWidth="2" />
      <path d="M353 644.5h23M369.5 645v67M375.5 645v67M668 644.5h23M668.5 645v67M674.5 645v67M684.5 645v67M690.5 645v67" stroke={GN} />
      <path d="M312.5 702v11M734.5 702v11" stroke={BL} /><path d="M313 703h421M313 713h421" stroke={BL} strokeWidth="2" />
      <path d="M312.5 632.5h422v17h-422z" stroke="#fff" /><path d="M325 633.5h396" stroke="#999" />
      <path d="M583.5 560v53M550 599.5h33" stroke={BU} /><path d="M550.5 600v33M510 632.5h53" stroke={GR} />
      <path d="M575.5 624.5h15v15h-15z" stroke="#aaa" />
      <path d="M202.5 893v25" stroke={BU} /><path d="M180 917.5h23" stroke={GR} />
    </g>
    <path d="M583 539l5 21h-9z" fill={BU} /><path d="M488 633l23-4v8z" fill={GR} /><G x={486} y={630} c={GR}>y</G>
    <G x={205} y={891} c={BU}>z</G><G x={182} y={916} c={GR}>y</G><G x={206} y={916} c="#a01010">x</G>
    <FlatCube x={887} y={594} ch="左" />
  </Scene>
);
const PerspScene = () => (
  <Scene {...viewProps("950 539 764 406")}>
    <path d="M1161 747L1530 749 1541 796 1150 793z" fill="#57bbcc" />
    <path d="M1150 793L1541 796 1540 803 1151 799z" fill="#3d8993" />
    <path d="M1194 745h19l-1 28-15 1z" fill="#93a98b" /><path d="M1212 745h2v22l-2 6z" fill="#5d7a70" />
    <path d="M1484 748h16l-4 28h-15z" fill="#93a98b" /><path d="M1481 748h4l-4 28-2-6z" fill="#0a0a0a" />
    <path d="M1184 597L1508 599 1548 739 1144 737z" fill="#cb5555" />
    <path d="M1144 737L1548 739 1546 753 1146 749z" fill="#943b3b" />
    <path d="M1159 729L1193 602 1498 604 1533 732" stroke="#bd4f4f" /><path d="M1178 657L1513 662" stroke="#d26464" />
    <g shapeRendering="crispEdges">
      <path d="M1361.5 602v13M1322 630.5h52" stroke={GR} /><path d="M1361 614v16" stroke={GR} strokeWidth="2" />
      <path d="M1362 601.5h33" stroke={BU} /><path d="M1361 614.5h32" stroke={RD} />
      <path d="M1386.5 622.5h15v15h-15z" stroke="#aaa" />
      <path d="M976.5 898v18" stroke={BU} /><path d="M955 917.5h22" stroke={GR} />
    </g>
    <path d="M1397 565L1394.5 612" stroke={BU} strokeWidth="1.5" /><path d="M1399 539l3 27h-9z" fill={BU} />
    <path d="M1393 600L1395.5 660" stroke={RD} strokeWidth="1.5" /><path d="M1391 583l3 12-4 4-3-3z" fill={RD} />
    <path d="M1391 596L1393.5 621" stroke={YL} strokeWidth="1.5" strokeDasharray="7 2" />
    <path d="M1300 630l22-5v10z" fill={GR} /><G x={1297} y={628} c={GR}>y</G><G x={1393} y={581} c="#c0bc20">x</G>
    <G x={978} y={896} c={BU}>z</G><G x={954} y={917} c={GR}>y</G>
    <ellipse cx="1659" cy="607" rx="32" ry="22" stroke="#7e8186" strokeWidth="6" />
    <ellipse cx="1659" cy="607" rx="27" ry="17" stroke="#55575a" />
    <path d="M1645 574h28l1 39h-29z" fill="#858585" /><path d="M1645 588h29" stroke="#777" />
    <G x={1659} y={581} c="#5a5e63" s={12}>上</G><G x={1659} y={600} c="#5a5e63" s={15}>左</G>
    <G x={1659} y={631} c="#999">西</G><G x={1694} y={606} c="#999" s={10}>南</G><G x={1625} y={606} c="#999" s={10}>北</G>
  </Scene>
);
function Viewport({ name, mode = "线框", active, children, extra }) {
  return (
    <View $active={active}>
      {children}
      <ViewLabel>
        <button>[+]</button><button>{`[${name} ]`}</button><button>[标准 ]</button><button>{`[${mode} ]`}</button>
      </ViewLabel>
      {extra}
    </View>
  );
}

/* ---------- caddy ---------- */
const C = ({ children }) => (
  <svg width="14" height="14" viewBox="0 0 14 14" fill="none" stroke="#444">{children}</svg>
);
const DownArrow = <C><path d="M5 1h4v6h3l-5 6-5-6h3z" /></C>;
const Cyl = <C><path d="M1 3v8c2 3 10 3 12 0V3" fill="#3f9d9d" /><ellipse cx="7" cy="3.5" rx="6" ry="2.5" fill="#bbb" /></C>;
const CaddyForm = () => (
  <Caddy>
    <CaddyTitle><i /><span>切角<br />-确定</span></CaddyTitle>
    <Pill as="button" type="button" $w={48} $tint="rose"><C><path d="M7 1l6 12H1z" fill="#3f9d9d" /><path d="M7 6l3 5H4z" fill="#9cc" /></C>{DownArrow}</Pill>
    <Pill $w={80} $tint="cyan"><C><path d="M0 1h8v4H0z" fill="#45bfbf" /><path d="M8 1h5v4H8zM6 6v7l2-2 2 3" /></C><input aria-label="数量" defaultValue="1.0mm" /></Pill>
    <Pill $w={71}><C><path d="M4 1h6v12H4z" fill="#3f9d9d" /><path d="M6 3h2v2H6zM6 6h2v2H6zM6 9h2v2H6z" fill="#bbb" /></C><input aria-label="分段" defaultValue="1" /></Pill>
    <Pill $w={71} $off><C><path d="M1 1h12v2H4v10H1zM4 3h3v3H4zM8 7h5l-2 2v4" stroke="#2c2c2c" /></C><input aria-label="张力" defaultValue="1.0" /></Pill>
    <CaddyRow>
      <Pill as="button" type="button" $w={48}><C><path d="M1 1h12v12H1zM1 5h12M1 9h12M5 1v12M9 1v12" stroke="#222" /><path d="M5 5h4v4H5z" fill="#45bfbf" /></C><C><path d="M2 2h10v10H2z" fill="#868686" stroke="none" /></C></Pill>
      <Pill as="button" type="button" $w={48} $off><C><path d="M1 1h12v12H1zM1 5h12M1 9h12M5 1v12M9 1v12" stroke="#151515" strokeWidth="1.5" /></C><C><path d="M2 2h10v10H2z" fill="#444" stroke="none" /></C></Pill>
    </CaddyRow>
    <CaddyRow>
      <Pill as="button" type="button" $w={48}>{Cyl}<C><path d="M2 2h10v10H2z" fill="#868686" stroke="none" /><path d="M2 8l3 4 8-11" stroke="#277" strokeWidth="3" /></C></Pill>
      <Pill as="button" type="button" $w={48}><C><path d="M7 1l6 3v6l-6 3-6-3V4zM1 4l6 3 6-3M7 7v6M4 2l6 4M10 2L4 6" /></C>{DownArrow}</Pill>
      <Pill $w={71}>{Cyl}<input aria-label="阈值" defaultValue="30.0" /></Pill>
    </CaddyRow>
    <CaddyRow>
      <Pill as="button" type="button" $w={22} $strong><C><path d="M2 8l3 4 7-10" stroke="#333" strokeWidth="4" /><path d="M2 8l3 4 7-10" stroke="#3aa" strokeWidth="2" /></C></Pill>
      <Pill as="button" type="button" $w={22}><C><path d="M5 1h4v4h4v4H9v4H5V9H1V5h4z" fill="#3f9d9d" /></C></Pill>
      <Pill as="button" type="button" $w={22}><C><path d="M2 2l10 10M12 2L2 12" stroke="#444" strokeWidth="5" /><path d="M2 2l10 10M12 2L2 12" stroke="#3f9d9d" strokeWidth="3" /></C></Pill>
    </CaddyRow>
  </Caddy>
);

/* ---------- sections ---------- */
const Tl = ({ i, on, more }) => <Tool aria-label={i} $on={on} $more={more}>{ic[i]}</Tool>;

function MainToolbar() {
  return (
    <Toolbar>
      <ToolGroup>
        <Tl i="undo" /><Tl i="redo" /><Sep />
        <Tl i="link" /><Tl i="unlink" /><Tl i="bind" /><Sep />
        <Select w={68} m="0 1px" label="选择过滤器" value="全部" />
        <Tl i="sel" /><Tl i="selName" /><Tl i="rect" more /><Tl i="win" /><Sep />
        <Tl i="move" on /><Tl i="rotate" /><Tl i="scale" more /><Tl i="place" more />
        <Select w={68} m="0 1px" label="参考坐标系" value="视图" />
        <Tl i="pivot" more /><Sep />
        <Tl i="manip" /><Tl i="kbd" /><Sep />
        <Tool aria-label="3D 捕捉" $more><Txt3 t="3" /></Tool>
        <Tl i="angle" />
        <Tool aria-label="百分比捕捉"><Txt3 t="%" /></Tool>
        <Tl i="spin" /><Sep />
        <Tl i="brace" />
        <Select w={118} m="0 1px" label="命名选择集" value="创建选择集" />
        <Sep />
        <Tl i="mirror" /><Tl i="align" more /><Sep />
        <Tl i="layers" /><Tl i="layer2" /><Sep />
        <Tl i="ribbon" on /><Tl i="curve" /><Tl i="schem" /><Sep />
        <Tl i="mat" more /><Sep />
        <Tl i="rset" /><Tl i="rfb" /><Tl i="rend" more /><Tl i="rcloud" /><Tl i="gal" />
      </ToolGroup>
    </Toolbar>
  );
}

const menus = ["编辑(E)", "工具(T)", "组(G)", "视图(V)", "创建(C)", "修改器(M)", "动画(A)", "图形编辑器(D)", "渲染(R)", "Civil View", "自定义(U)", "脚本(S)", "内容", "帮助(H)"];

function Top() {
  return (
    <Header>
      <AppButton aria-label="应用程序">
        <svg width="38" height="38" viewBox="0 0 38 38">
          <defs><linearGradient id="three" x1="0" y1="0" x2="1" y2="1"><stop offset="0" stopColor="#35c3c1" /><stop offset="1" stopColor="#08666b" /></linearGradient></defs>
          <path d="M11 4c6-4 15-2 15 4 0 3-2 4-4 5 3 1 5 3 5 6 0 7-10 9-17 5l1-5c4 3 10 2 10-1 0-2-3-3-7-3l1-4c3 0 5-1 5-3s-4-2-8 0z" fill="url(#three)" />
          <path d="M31 18h6l-3 4z" fill="#444" />
          <text x="18" y="36" textAnchor="middle" fontSize="8" fontWeight="700" fontFamily="Open Sans, sans-serif">MAX</text>
        </svg>
      </AppButton>
      <TitleBar>
        <Strip $w={320}>
          <StripButton $w={30}><Q><path d="M3.5 1.5h8l4 4v11h-12z" /></Q></StripButton>
          <StripButton><Q><path d="M1.5 15.5v-11h5l1 2h7v3M1.5 15.5l4-7h12l-4 7z" /></Q></StripButton>
          <StripButton><Q><path d="M2 1h14v16H2z" fill="#667" /><path d="M5 1h8v6H5zM5 10h8v7H5z" /></Q></StripButton>
          <StripButton><Q><path d="M1 7l6-5v3c7 0 9 5 8 9-1-3-4-4-8-4v3z" /></Q></StripButton>
          <StripButton $w={12}><Tri s={3} /></StripButton>
          <StripButton><Q><path d="M17 7l-6-5v3c-7 0-9 5-8 9 1-3 4-4 8-4v3z" /></Q></StripButton>
          <StripButton $w={12}><Tri s={3} /></StripButton>
          <StripButton $w={23}><Q><path d="M2 2h6l1 2h5v9H2z" /><path d="M9 6h7v11H9z" /><path d="M11 9h3M11 11h3M11 13h3" stroke="#37c" /></Q></StripButton>
          <Select w={130} h={22} white caret="#555" r={4} label="工作区" value="工作区: 默认" />
          <StripButton $w={14}><svg width="8" height="9"><path d="M0 1h8M0 4h8L4 9z" fill="#444" stroke="#444" /></svg></StripButton>
        </Strip>
        <TitleText><span>Autodesk 3ds Max 2017</span><span>cj1.max</span></TitleText>
        <TitleRight>
          <Strip $w={460}>
            <StripButton $w={13}><Tri d="right" s={4} /></StripButton>
            <SearchBox aria-label="搜索" placeholder="键入关键字或短语" />
            <StripButton><Q><path d="M1 16v-7l2-7h4l1 4h2l1-4h4l2 7v7h-6v-6H7v6z" /><path d="M1 12h6M11 12h6M4 2v8M14 2v8" /></Q></StripButton>
            <StripButton><Q><path d="M3 2c0 6 4 9 9 8zM8 11l-4 5h9l-2-5M8 7l6-6" /></Q></StripButton>
            <StripButton><Q><path d="M9 1l2 6h6l-5 4 2 6-5-4-5 4 2-6-5-4h6z" /></Q></StripButton>
            <StripButton><Q><path d="M9 1c5 0 5 6 2 9v2l6 3v2H1v-2l6-3v-2C4 7 4 1 9 1z" /></Q></StripButton>
            <StripButton $w={28}>登录</StripButton>
            <StripButton $w={64} $side="flex-end"><Tri s={3} /></StripButton>
            <StripButton $w={34}><Q><path d="M1 2h4l4 5V4l3-2h5v2l-4 5 4 5v2h-5l-3-2v-3l-4 5H1v-2l4-5-4-5z" fill="#ccd4ea" /><path d="M11 2h6l-5 7 5 7h-5l-4-7z" fill="#3f62b8" /></Q></StripButton>
            <Sep $m="0 1px" />
            <StripButton $w={30}><svg width="18" height="18" viewBox="0 0 18 18"><circle cx="9" cy="9" r="8" fill="#eef" stroke="#333" /><text x="9" y="14" textAnchor="middle" fontSize="13" fontWeight="700" fill="#1d4fb0" fontFamily="Liberation Sans, sans-serif">?</text></svg></StripButton>
            <StripButton $w={8}><Tri s={3} /></StripButton>
          </Strip>
          <WinButtons>
            <StripButton $w={46} aria-label="最小化"><svg width="11" height="11"><path d="M0 5.5h11" stroke="#111" /></svg></StripButton>
            <StripButton $w={46} aria-label="还原"><svg width="11" height="11" fill="none" stroke="#111"><path d="M.5 2.5h8v8h-8zM2.500 2V.5h8v8H9" /></svg></StripButton>
            <StripButton $w={46} aria-label="关闭"><svg width="11" height="11" stroke="#111"><path d="M0 0l11 11M11 0L0 11" /></svg></StripButton>
          </WinButtons>
        </TitleRight>
      </TitleBar>
      <MenuBar>
        {menus.map((m) => <MenuItem key={m} $plain={!m.includes("(")}>{m}</MenuItem>)}
      </MenuBar>
    </Header>
  );
}

function SceneExplorer() {
  const names = ["Box001", "Box002", "ChamferBox001", "ChamferBox002", "ChamferBox003", "ChamferBox004", "ChamferBox005"];
  return (
    <Explorer>
      <ExplorerMenu><button>选择</button><button>显示</button></ExplorerMenu>
      <More aria-label="更多"><Chev /></More>
      <ExplorerBody>
        <FilterColumn>
          {filters.map((f, i) => <Filter key={i} $on>{f}</Filter>)}
          <Rule />
          {docs.map((f, i) => <Filter key={i}>{f}</Filter>)}
          <Rule />
          {funnels.map((f, i) => <Filter key={i}>{f}</Filter>)}
        </FilterColumn>
        <Tree>
          <div>
            <TreeHead>名称(按升序排序)</TreeHead>
            <TreeList>
              {names.map((n, i) => (
                <TreeRow key={n}>
                  <Branch /><Eye />
                  <svg width="16" height="12"><circle cx="9" cy="6" r="5" fill={L} /></svg>
                  <TreeName $sel={i === 1} $odd={i % 2 === 0}>{n}</TreeName>
                </TreeRow>
              ))}
            </TreeList>
          </div>
          <HScroll>
            <svg width="6" height="10" fill="none" stroke="#333" strokeWidth="2"><path d="M5 1L1 5l4 4" /></svg><i />
            <svg width="6" height="10" fill="none" stroke="#333" strokeWidth="2"><path d="M1 1l4 4-4 4" /></svg>
          </HScroll>
        </Tree>
      </ExplorerBody>
      <ExplorerFoot><More aria-label="更多"><Chev /></More></ExplorerFoot>
    </Explorer>
  );
}

const Head = ({ open, children }) => (
  <RollHead>
    <button><Tri d={open ? "down" : "right"} c="#ccc" s={3} />{children}</button>
    <svg width="6" height="6" fill="#999"><path d="M0 0h1v1H0zM2 0h1v1H2zM4 0h1v1H4zM0 2h1v1H0zM2 2h1v1H2zM4 2h1v1H4zM0 4h1v1H0zM2 4h1v1H2zM4 4h1v1H4z" /></svg>
  </RollHead>
);
const Setting = ({ children }) => (
  <Split><Btn>{children}</Btn><Btn aria-label="设置"><WinIcon /></Btn></Split>
);

function CommandPanel() {
  const dim = "#9a9a9a";
  return (
    <Command>
      <Tabs>
        <Tab aria-label="创建"><svg width="18" height="18"><path d="M9 1v16M1 9h16" stroke={dim} strokeWidth="2" /></svg></Tab>
        <Tab $on aria-label="修改"><svg width="18" height="18" fill="none" stroke={T}><path d="M2.500 5v8M15.5 5v8M5 2.5h8M5 15.5h8M1 1h3v3H1zM14 1h3v3h-3zM1 14h3v3H1zM14 14h3v3h-3z" /><path d="M5 13c1-5 3-8 8-8" stroke="#ddd" strokeWidth="3" /></svg></Tab>
        <Tab aria-label="层次"><svg width="18" height="18" fill="none"><path d="M3 1h12v6H3z" fill={dim} /><path d="M9 7v7M4 14v-4h10v4" stroke="#2f7d7d" strokeWidth="2" /><path d="M2 14h4v3H2zM12 14h4v3h-4z" fill="#2f7d7d" /></svg></Tab>
        <Tab aria-label="运动"><svg width="20" height="18" fill="none"><circle cx="7" cy="9" r="6" stroke="#2f7d7d" strokeWidth="2" /><circle cx="12" cy="9" r="6.5" fill={dim} /></svg></Tab>
        <Tab aria-label="显示"><svg width="18" height="18"><path d="M1 3h16v9H1zM5 15h8v2H5z" fill={dim} /></svg></Tab>
        <Tab aria-label="实用程序"><svg width="18" height="18" fill="none" stroke={dim}><path d="M7 7l9 9" strokeWidth="3" /><path d="M2 3a4 4 0 0 0 6 5 4 4 0 0 0-1-6" strokeWidth="2.5" /></svg></Tab>
      </Tabs>
      <Pad>
        <NameRow><NameInput aria-label="对象名称" defaultValue="Box002" /><Swatch $w={17} $c="#d85a5a" aria-label="颜色" /></NameRow>
        <Select h={20} label="修改器列表" value="修改器列表" />
        <Stack>
          <StackRow>
            <Tri d="right" c="#ddd" s={4} />
            <button>可编辑多边形<svg width="14" height="11" fill="none" stroke="#111"><path d="M1 7l12-6-4 9z" /></svg></button>
          </StackRow>
        </Stack>
        <StackTools>
          <StackTool><svg width="14" height="14"><path d="M1 13l5-5" stroke={L} strokeWidth="2" /><path d="M4 6l4 5 1-3 4-4-3-3-4 4z" fill={L} stroke={L} /></svg></StackTool>
          <Sep $m="0 6px" />
          <StackTool><svg width="8" height="16" fill="none" stroke={L}><path d="M0 1h8M2 1v14h4V1" strokeWidth="1.5" /><path d="M4 7v7" stroke={T} strokeWidth="3" /></svg></StackTool>
          <Sep $m="0 6px 0 7px" />
          <StackTool $w={24}><svg width="18" height="16" fill="#555" stroke="#292929"><circle cx="4.5" cy="4.5" r="3.5" /><path d="M8 4l5 3M14 3v5" /><circle cx="8" cy="12" r="3" /><circle cx="13" cy="11" r="3.5" /></svg></StackTool>
          <StackTool $w={24}><svg width="13" height="16" fill="#4a4a4a" stroke="#292929"><path d="M0 3h13M4 3V1h5v2M2 4v11h9V4M4.5 6v7M6.5 6v7M8.5 6v7" /></svg></StackTool>
          <Sep $m="0 6px 0 5px" />
          <StackTool><svg width="15" height="15"><path d="M1 1h12v13H1z" fill={L} /><path d="M2 4h9M3 7h3v2H3zM8 7h3v2H8zM3 11h3v2H3zM8 11h3v2H8z" stroke="#333" fill="none" /><path d="M6 9l8-8" stroke={O} strokeWidth="3" /></svg></StackTool>
        </StackTools>
        <Splitter><hr /><i /><hr /></Splitter>
        <Rollouts>
          <RollList>
            <Roll>
              <Group $m="0 14px 0 10px" $p="2px 4px 6px 1px">
                <legend>预览选择</legend>
                <RadioRow>
                  <Check><input type="radio" name="preview" defaultChecked />禁用</Check>
                  <Check><input type="radio" name="preview" />子对象</Check>
                  <Check><input type="radio" name="preview" />多个</Check>
                </RadioRow>
              </Group>
              <Status>选择了边 50</Status>
            </Roll>
            <Roll><Head>软选择</Head></Roll>
            <Roll>
              <Head open>编辑边</Head>
              <RollBody $t={8}>
                <Btn>插入顶点</Btn>
                <Pair><Btn>移除</Btn><Btn>分割</Btn></Pair>
                <Pair><Setting>挤出</Setting><Setting>焊接</Setting></Pair>
                <Pair><Setting>切角</Setting><Btn>目标焊接</Btn></Pair>
                <Pair><Setting>桥</Setting><Setting>连接</Setting></Pair>
                <Btn>利用所选内容创建图形</Btn>
                <Group $m="-3px -3px 0 -2px" $p="2px 4px 6px">
                  <legend>边属性</legend>
                  <FieldRow><em>权重:</em><Num w={72} v="1.0" label="权重" /></FieldRow>
                  <FieldRow><em>折缝:</em><Num w={72} v="0.0" label="折缝" /></FieldRow>
                  <InnerStack>
                    <Pair><Btn>硬</Btn><Btn>平滑</Btn></Pair>
                    <Line><Swatch $w={19} $c="#00fb6e" aria-label="硬边颜色" /><Check $g={3}><input type="checkbox" />显示硬边</Check></Line>
                  </InnerStack>
                </Group>
                <Pair><Btn>编辑三角形</Btn><Btn>旋转</Btn></Pair>
              </RollBody>
            </Roll>
            <Roll>
              <Head open>编辑几何体</Head>
              <RollBody $t={4}>
                <Btn>重复上一个</Btn>
                <Group $m="0 -2px 0 -1px" $p="2px 7px 4px">
                  <legend>约束</legend>
                  <RadioGrid>
                    <Check><input type="radio" name="cons" defaultChecked />无</Check>
                    <Check><input type="radio" name="cons" />边</Check>
                    <Check><input type="radio" name="cons" />面</Check>
                    <Check><input type="radio" name="cons" />法线</Check>
                  </RadioGrid>
                </Group>
                <KeepUV><Check $g={4}><input type="checkbox" />保持 UV</Check><Btn aria-label="设置"><WinIcon /></Btn></KeepUV>
                <Pair><Btn>创建</Btn><Btn>塌陷</Btn></Pair>
                <Pair><Setting>附加</Setting><Btn>分离</Btn></Pair>
              </RollBody>
            </Roll>
          </RollList>
          <VScroll />
        </Rollouts>
      </Pad>
    </Command>
  );
}

function TimeLine() {
  return (
    <>
      <SliderRow>
        <SliderPart $w={14}>&lt;</SliderPart><SliderPart $w={123}>0 / 100</SliderPart><SliderPart $w={14}>&gt;</SliderPart>
      </SliderRow>
      <Track>
        <TrackIcon aria-label="曲线">
          <svg width="16" height="14" fill="none"><path d="M2 2v12" stroke={L} strokeWidth="4" strokeDasharray="1 1.500" /><path d="M6 11c2-12 4-12 5-4s3 5 4 2" stroke={T} strokeWidth="1.5" /></svg>
        </TrackIcon>
        <Ruler>
          {Array.from({ length: 101 }, (_, i) => (
            <Tick key={i} $major={i % 5 === 0} $now={i === 0}>{i % 5 === 0 && <b>{i}</b>}</Tick>
          ))}
        </Ruler>
      </Track>
    </>
  );
}

const P = ({ d }) => <svg width="18" height="14" viewBox="0 0 18 14" fill={L}><path d={d} /></svg>;
const N = ({ children }) => <svg width="18" height="18" viewBox="0 0 18 18" fill="none" stroke={L} strokeWidth="2">{children}</svg>;

function Bottom() {
  return (
    <StatusBar>
      <Listener>
        <ListenerLine $macro aria-label="宏录制器" />
        <ListenerLine aria-label="侦听器" defaultValue="欢迎使用 MAXScript" />
      </Listener>
      <Prompt>选择了 1个 对象</Prompt>
      <Cluster $mr={23}>
        <CRow>
          <IconBtn $w={27}><N><path d="M1 5V1h4M13 1h4v4M17 13v4h-4M5 17H1v-4" strokeWidth="1.5" /><path d="M6 6h6v6H6z" fill={T} stroke="none" /></N></IconBtn>
          <IconBtn $w={27}><N><path d="M5 8V5c0-5 8-5 8 0v3" /><path d="M4 8h10v8H4z" fill={L} stroke="none" /><path d="M9 10v4" stroke="#444" /></N></IconBtn>
          <IconBtn $w={27}><N><path d="M2 2h14v14H2zM9 2v14M2 9h14" strokeWidth="1.5" /><circle cx="9" cy="9" r="3.5" fill="#444" /></N></IconBtn>
          <CRow as="label" $g={3} $pl={3}>X:<Num w={68} h={17} v="211.298mm" label="X" /></CRow>
          <CRow as="label" $g={3} $pl={3}>Y:<Num w={68} h={17} v="-176.813mm" label="Y" /></CRow>
          <CRow as="label" $g={3} $pl={3}>Z:<Num w={68} h={17} v="234.087mm" label="Z" /></CRow>
          <CRow $pl={5}>栅格 = 100.0mm</CRow>
        </CRow>
        <CRow $g={5} $pl={310}>
          <IconBtn $on $w={21}><svg width="16" height="16" fill="none" stroke="#ddd"><path d="M8 1l6 3v8l-6 3-6-3V4zM2 4l6 4 6-4M8 8v7M5 5l6-2" /></svg></IconBtn>
          <span>添加时间标记</span>
        </CRow>
      </Cluster>
      <Cluster $mr={5}><KeyBtn $w={40} $h={42} aria-label="设置关键点"><svg width="28" height="32"><path d="M12 2v20M2 12h20" stroke={L} strokeWidth="4" /><path d="M14 24l8-8M18 20l3 3" stroke={T} strokeWidth="2" /><circle cx="24" cy="16" r="2" fill="none" stroke={T} strokeWidth="2" /></svg></KeyBtn></Cluster>
      <Cluster $mr={5}>
        <KeyBtn $w={65}>自动关键点</KeyBtn>
        <KeyBtn $w={65}>设置关键点</KeyBtn>
      </Cluster>
      <Cluster $mr={9}>
        <Select w={111} h={19} label="选定对象" value="选定对象" />
        <CRow $g={4}>
          <IconBtn $w={22}><N><path d="M2 16c3-14 11-14 14 0" stroke={T} /><path d="M2 4h14" strokeDasharray="3 2" /></N></IconBtn>
          <KeyBtn $w={85}>关键点过滤器...</KeyBtn>
        </CRow>
      </Cluster>
      <Cluster $mr={2}>
        <CRow>
          <IconBtn><P d="M2 2h2v10H2zM10 2v10L4 7zM17 2v10l-6-5z" /></IconBtn><Sep $m="0 2px" />
          <IconBtn><P d="M8 1v12L1 7zM10 1h2v12h-2zM14 1h2v12h-2z" /></IconBtn>
          <IconBtn><P d="M4 0v14l11-7z" /></IconBtn>
          <IconBtn><P d="M2 1h2v12H2zM6 1h2v12H6zM10 1v12l7-6z" /></IconBtn><Sep $m="0 2px" />
          <IconBtn><P d="M1 2v10l6-5zM8 2v10l6-5zM14 2h2v10h-2z" /></IconBtn>
        </CRow>
        <CRow>
          <IconBtn><P d="M2 7l6-5v10zM16 7l-6-5v10z" /></IconBtn><Sep $m="0 2px" />
          <Num w={69} h={17} v="0" label="当前帧" /><Sep $m="0 2px" />
          <IconBtn><N><circle cx="8" cy="8" r="6" /><path d="M8 4v4h3" /><circle cx="13" cy="13" r="3" stroke={O} /></N></IconBtn>
        </CRow>
      </Cluster>
      <Cluster $mr={4}>
        <CRow>
          <IconBtn><N><circle cx="11" cy="7" r="5" /><path d="M7 11l-6 6" strokeWidth="3" /></N></IconBtn>
          <IconBtn><N><path d="M8 1h9v10H8z" fill={T} stroke="none" /><path d="M12 1v10M8 6h9" stroke="#444" strokeWidth="1" /><circle cx="8" cy="9" r="4" fill="#444" /><path d="M5 12l-4 5" /></N></IconBtn>
          <IconBtn><N><path d="M1 5V1h4M13 1h4v4M17 13v4h-4M5 17H1v-4" strokeWidth="1.5" /><path d="M9 3l6 3v6l-6 3-6-3V6z" fill={T} stroke="none" /><path d="M3 6l6 3 6-3M9 9v6" stroke="#2a6f6f" strokeWidth="1" /></N></IconBtn>
          <IconBtn><N><path d="M12 1l5 3v7l-5 3-4-3V4z" fill={T} stroke="none" /><path d="M1 12l6-3v6zM8 12h5" fill={L} strokeWidth="1" /></N></IconBtn>
        </CRow>
        <CRow>
          <IconBtn><N><path d="M3 3l13 6-13 7M8 5v8" strokeWidth="1.5" /></N></IconBtn>
          <IconBtn><N><circle cx="9" cy="2" r="1" /><path d="M9 5v5l4 7M9 10l-4 7M5 9l4-4 4 4" /></N></IconBtn>
          <IconBtn><N><circle cx="8" cy="8" r="6" fill={T} stroke="none" /><path d="M2 16c8 0 14-7 14-14" /><path d="M8 2v12M2 8h12" strokeWidth="1" /></N></IconBtn>
          <IconBtn><N><path d="M1 1h16v16H1z" fill={L} stroke="none" /><path d="M3 9h6v6H3zM9 8l5-5M10 3h4v4" stroke="#444" strokeWidth="1.5" /></N></IconBtn>
        </CRow>
      </Cluster>
    </StatusBar>
  );
}

function Tasks() {
  return (
    <TaskBar>
      <TaskItem $start aria-label="开始"><svg width="17" height="17" fill="#fff"><path d="M0 2l7-1v7H0zM8 1l9-1v8H8zM0 9h7v7l-7-1zM8 9h9v8l-9-1z" /></svg></TaskItem>
      <TaskSearch>
        <svg width="17" height="17" fill="none" stroke="#222" strokeWidth="1.5"><circle cx="10.5" cy="6" r="5" /><path d="M7 10l-6 6" /></svg>
        <input aria-label="搜索" placeholder="在这里输入你要搜索的内容" />
      </TaskSearch>
      <TaskItem aria-label="Cortana"><svg width="16" height="16"><circle cx="8" cy="8" r="6.5" fill="none" stroke="#fff" strokeWidth="2" /></svg></TaskItem>
      <TaskItem aria-label="任务视图"><svg width="17" height="16" fill="none" stroke="#fff"><path d="M1 0v3h10V0M1 16v-3h10v3M1.5 5.500h9v5h-9zM14.5 0v16" /><path d="M13 5h3v3h-3z" fill="#fff" /></svg></TaskItem>
      <TaskItem aria-label="Edge"><svg width="24" height="24"><defs><linearGradient id="edge" x1="0" y1="1" x2="1" y2="0"><stop offset=".1" stopColor="#0c59b8" /><stop offset=".5" stopColor="#1d9fe0" /><stop offset="1" stopColor="#5fe05a" /></linearGradient></defs><circle cx="12" cy="12" r="12" fill="url(#edge)" /><path d="M9 13c0-4 6-5 7-1 0 2-2 2-1 4 2 2 6 1 8-1-2 6-8 8-11 5-2-1-3-4-3-7z" fill="#2f3020" /><path d="M9 10c-5 4-3 11 3 13-7 1-12-5-12-11 2-4 6-5 9-2z" fill="#1166c4" /></svg></TaskItem>
      <TaskItem $run aria-label="资源管理器"><svg width="22" height="20"><path d="M0 1h9l2 3h11v15H0z" fill="#f7c648" /><path d="M0 1h9l2 3H0z" fill="#d99a1c" /><path d="M4 19v-8h14v8h-4v-4H8v4z" fill="#3e97dc" /></svg></TaskItem>
      <TaskItem $run aria-label="画图"><svg width="24" height="24"><path d="M2 15C0 7 9 3 16 7c7 3 4 9 1 10s-1 4-4 5c-5 1-10-2-11-7z" fill="#bfe0f2" /><circle cx="6" cy="11" r="2" fill="#e35" /><circle cx="11" cy="8" r="2" fill="#7b3" /><circle cx="6" cy="16" r="2" fill="#d44" /><circle cx="11" cy="13" r="1.5" fill="#333" /><path d="M21 3l-7 19" stroke="#d98a3d" strokeWidth="3" /><path d="M22 0l-2 6" stroke="#8a5a2e" strokeWidth="4" /></svg></TaskItem>
      <TaskItem aria-label="截图"><svg width="24" height="24"><ellipse cx="11" cy="9" rx="10" ry="6" fill="#f4f4f4" stroke="#d33" transform="rotate(-25 11 9)" /><path d="M1 15c3 2 7 3 11 3" stroke="#c33" strokeWidth="3" fill="none" /><path d="M7 4l9 12M16 2l-4 13" stroke="#888" strokeWidth="1.5" /><circle cx="14" cy="20" r="3" fill="none" stroke="#1a6fb5" strokeWidth="2" /><circle cx="20" cy="18" r="3" fill="none" stroke="#1a6fb5" strokeWidth="2" /></svg></TaskItem>
      <TaskItem aria-label="Firefox"><svg width="24" height="24"><circle cx="12" cy="13" r="11" fill="#f5512e" /><path d="M14 0c2 5 9 7 9 14 0 5-4 10-10 10 5-3 7-8 4-12-2-3-4-6-3-12z" fill="#ffc52e" /><circle cx="11" cy="13" r="5" fill="#7b46d8" /><path d="M2 7c3-1 6 1 9 3l-4 3c0 5 6 7 9 3-1 5-9 7-13 2S0 11 2 7z" fill="#ff8a1e" /></svg></TaskItem>
      <TaskItem $run aria-label="看图"><svg width="24" height="24"><rect width="24" height="24" rx="2" fill="#4b76be" /><rect x="2" y="2" width="20" height="20" fill="#eef4fb" /><path d="M4 14C10 13 13 9 15 3c2 6-3 13-11 15z" fill="#2f67b8" /><path d="M9 21c6-1 11-5 12-12-5 5-6 9-12 12z" fill="#f08a1d" /></svg></TaskItem>
      <TaskItem $on aria-label="3ds Max"><svg width="24" height="24"><rect width="24" height="24" fill="#dcebec" /><text x="11" y="18" textAnchor="middle" fontSize="20" fontWeight="700" fontFamily="Open Sans, sans-serif" fill="#0c8f94">3</text><text x="17" y="23" textAnchor="middle" fontSize="5" fontWeight="700" fontFamily="Open Sans, sans-serif" fill="#065">MAX</text></svg></TaskItem>
      <TaskItem $run aria-label="优酷"><svg width="26" height="26"><rect width="24" height="24" rx="4" fill="#fff" /><path d="M6 4c4-1 11 3 12 6l-6 2z" fill="#ff2d6e" stroke="#ff2d6e" strokeWidth="3" strokeLinejoin="round" /><path d="M6 16l7-4 5 0-6 5z" fill="#25c4f5" /><rect x="12" y="14" width="13" height="12" rx="2" fill="#4aa5e8" stroke="#fff" /><path d="M16 17v6M21 17v6" stroke="#fff" strokeWidth="2.5" /></svg></TaskItem>
      <Tray>
        <Ime>拼</Ime>
        <StripButton $w={24} aria-label="显示隐藏的图标"><svg width="12" height="8" fill="none" stroke="#fff" strokeWidth="1.5"><path d="M0 7l6-6 6 6" /></svg></StripButton>
        <StripButton $w={24} aria-label="音量"><svg width="17" height="15" fill="none" stroke="#fff"><path d="M1 5.500h3l3-4v12l-3-4H1zM9 5c1 1 1 4 0 5M11 3c3 2 3 7 0 9M13 1c4 3 4 10 0 13" /></svg></StripButton>
        <StripButton $w={24} aria-label="网络"><svg width="17" height="17" fill="none" stroke="#fff"><circle cx="8" cy="8" r="7.5" /><ellipse cx="8" cy="8" rx="3.5" ry="7.5" /><path d="M1 5h14M1 11h14" /><circle cx="13" cy="13" r="3.5" fill="#333" /><path d="M11 15l4-4" /></svg></StripButton>
        <Clock>{"22:19\n2021/1/29"}</Clock>
        <StripButton $w={47} aria-label="通知"><svg width="26" height="24"><path d="M1 1h16v12h-9l-3 4v-4H1z" fill="#fff" /><path d="M4 4h10M4 7h10M4 10h7" stroke="#333" /><circle cx="17" cy="16" r="7.5" fill="#3a3a38" stroke="#999" /><text x="17" y="20" textAnchor="middle" fontSize="11" fontWeight="700" fill="#fff" fontFamily="Open Sans, sans-serif">3</text></svg></StripButton>
        <Peek />
      </Tray>
    </TaskBar>
  );
}

const Mark = () => (
  <Watermark width="352" height="170" viewBox="1470 872 352 170" fill="#dcdcdc" fillOpacity=".88" aria-label="Baidu 经验">
    <text x="1472" y="983" fontSize="74" fontWeight="700" fontFamily="Liberation Sans, sans-serif" stroke="#d0d0d0" strokeWidth="1">Bai</text>
    <ellipse cx="1629.5" cy="895.5" rx="12" ry="17" />
    <ellipse cx="1659.5" cy="898" rx="12.5" ry="16.5" transform="rotate(12 1659 898)" />
    <ellipse cx="1605" cy="920" rx="13" ry="16.5" />
    <ellipse cx="1678.5" cy="927" rx="13" ry="16" />
    <path d="M1641 923c9 0 14 6 18 13 6 9 25 17 25 33 0 12-9 17-18 17-9 0-15-3-25-3s-15 3-24 3c-10 0-18-7-18-18 0-14 18-23 24-32 4-7 9-13 18-13z" />
    <text x="1641" y="979" textAnchor="middle" fontSize="50" fontWeight="700" fontFamily="Liberation Sans, sans-serif" fill="#454545" fillOpacity="1">du</text>
    <text x="1696" y="979" fontSize="57" fontWeight="900" fontFamily="Noto Sans CJK SC, sans-serif">经验</text>
    <text x="1476" y="1030" fontSize="40" fontFamily="Open Sans, sans-serif" stroke="#d3d3d3">jingyan.baidu.com</text>
  </Watermark>
);

export default function App() {
  return (
    <Page>
      <Global />
      <Top />
      <MainToolbar />
      <RibbonTabs>
        <RibbonTab $near>建模</RibbonTab><RibbonTab>自由形式</RibbonTab><RibbonTab>选择</RibbonTab><RibbonTab>对象绘制</RibbonTab><RibbonTab $on>填充</RibbonTab>
        <StripButton $w={32} aria-label="最小化功能区"><svg width="24" height="9"><rect width="14" height="9" rx="3" fill="#eee" /><path d="M4 3h6l-3 4z" fill="#333" /><path d="M19 4h5l-2 3z" fill="#ccc" /></svg></StripButton>
      </RibbonTabs>
      <RibbonPanel>
        {["定义流", "定义空闲区域", "模拟", "显示", "编辑选定对象"].map((t) => <RibbonButton key={t}>{t}</RibbonButton>)}
      </RibbonPanel>
      <Body>
        <LeftStrip>
          <Expand aria-label="展开"><Tri d="right" c="#ddd" s={5} /></Expand>
          <LayoutButton aria-label="视口布局"><svg width="30" height="28" fill="#5d6673" stroke="#2b3340" strokeWidth="2"><path d="M1 1h13v12H1zM16 1h13v12H16zM1 15h13v12H1zM16 15h13v12H16z" /></svg></LayoutButton>
        </LeftStrip>
        <SceneExplorer />
        <Center>
          <Views>
            <Viewport name="顶"><TopScene /></Viewport>
            <Viewport name="前"><FrontScene /></Viewport>
            <Viewport name="左"><LeftScene /></Viewport>
            <Viewport name="透视" mode="默认明暗处理" active extra={<CaddyForm />}><PerspScene /></Viewport>
          </Views>
          <TimeLine />
        </Center>
        <CommandPanel />
      </Body>
      <Bottom />
      <Tasks />
      <Mark />
    </Page>
  );
}
